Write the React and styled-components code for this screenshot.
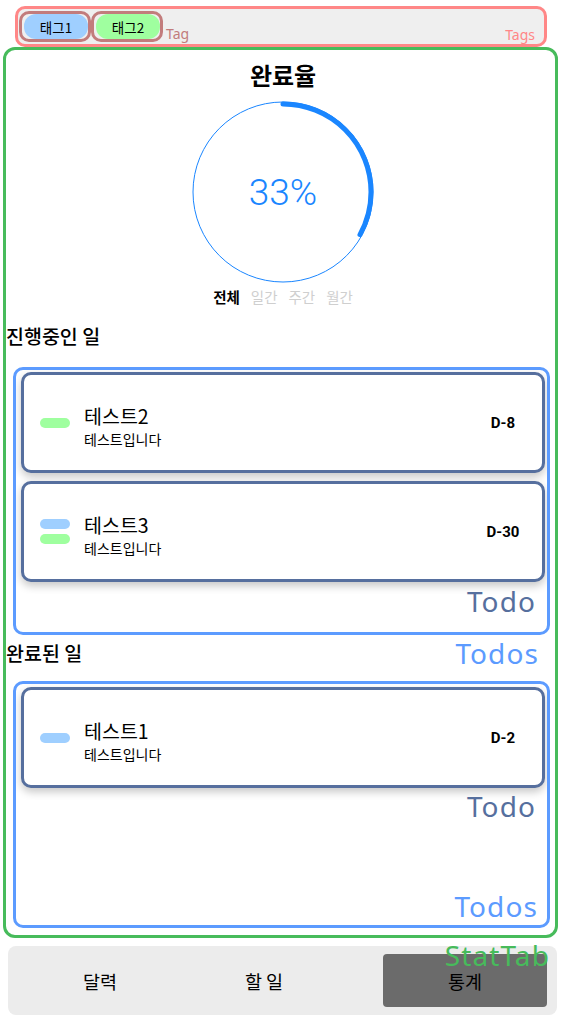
import React from "react";
import styled, { createGlobalStyle } from "styled-components";

const GlobalStyle = createGlobalStyle`
  html, body { margin: 0; padding: 0; background: #ffffff; }
  body { font-family: "Noto Sans CJK KR", "Noto Sans", sans-serif; color: #000; }
  * { box-sizing: border-box; }
`;

const Screen = styled.div`
  height: 100vh;
  display: flex;
  flex-direction: column;
`;

const DebugLabel = styled.span`
  position: absolute;
  font-family: "Noto Sans", "Noto Sans CJK KR", sans-serif;
  font-size: ${(p) => p.$size}px;
  line-height: ${(p) => p.$size}px;
  letter-spacing: ${(p) => (p.$size > 20 ? "1.1px" : "0")};
  color: ${(p) => p.$color};
  white-space: nowrap;
  pointer-events: none;
  z-index: 5;
`;

const TagsBar = styled.div`
  position: relative;
  margin: 6px 16px 0 15px;
  height: 41px;
  border: 3px solid #ff8787;
  border-radius: 10px;
  background: #efefef;
  display: flex;
  align-items: center;
  padding-left: 1px;
`;

const TagSlot = styled.div`
  position: relative;
  border: 3px solid #c27c7c;
  border-radius: 10px;
  padding-left: 2px;
  display: flex;
`;

const TagPill = styled.div`
  width: 64px;
  height: 25px;
  border-radius: 12px;
  background: ${(p) => p.$color};
  font-size: 13.5px;
  display: flex;
  align-items: center;
  justify-content: center;
`;

const StatTab = styled.section`
  position: relative;
  flex: 1;
  margin: 0 5px 0 3px;
  border: 3px solid #47bb5b;
  border-radius: 12px;
  display: flex;
  flex-direction: column;
  min-height: 0;
`;

const Summary = styled.div`
  padding-left: 5px;
  display: flex;
  flex-direction: column;
  align-items: center;
`;

const Title = styled.h1`
  margin: 10px 0 0;
  font-size: 24px;
  line-height: 30px;
  font-weight: 700;
`;

const RingWrap = styled.div`
  margin-top: 10px;
  position: relative;
  width: 184px;
  height: 184px;
`;

const RingText = styled.div`
  position: absolute;
  inset: 0;
  display: flex;
  align-items: center;
  justify-content: center;
  font-family: "Roboto", "Liberation Sans", sans-serif;
  font-weight: 300;
  font-size: 37px;
  color: #1a86ff;
`;

const Periods = styled.div`
  margin-top: 3px;
  display: flex;
  justify-content: center;
  gap: 11px;
  font-size: 14.5px;
  line-height: 20px;
`;

const Period = styled.span`
  color: ${(p) => (p.$active ? "#000" : "#cfcfcf")};
  font-weight: ${(p) => (p.$active ? 700 : 400)};
`;

const SectionTitle = styled.h2`
  margin: ${(p) => p.$top}px 0 0;
  font-size: 19.5px;
  line-height: 26px;
  font-weight: 500;
`;

const TodosBox = styled.div`
  position: relative;
  margin: ${(p) => p.$top}px 5px ${(p) => p.$bottom}px 7px;
  border: 3px solid #5c9bff;
  border-radius: 10px;
  ${(p) => (p.$grow ? "flex: 1;" : `height: ${p.$height}px;`)}
`;

const TodoList = styled.div`
  overflow: hidden;
  padding: ${(p) => p.$top}px 2px 12px 5px;
  display: flex;
  flex-direction: column;
  gap: 8px;
`;

const Card = styled.div`
  height: 101px;
  border: 3px solid #566f9e;
  border-radius: 10px;
  background: #fff;
  box-shadow: 0 4px 8px rgba(0, 0, 0, 0.22);
  display: flex;
  align-items: center;
  padding: 0 14px 0 16px;
`;

const Bars = styled.div`
  width: 30px;
  display: flex;
  flex-direction: column;
  gap: 5px;
`;

const Bar = styled.div`
  height: 10px;
  border-radius: 5px;
  background: ${(p) => p.$color};
`;

const TextCol = styled.div`
  flex: 1;
  margin-left: 14px;
  padding-top: 6px;
  display: flex;
  flex-direction: column;
`;

const TodoTitle = styled.div`
  font-size: 19.5px;
  line-height: 26px;
`;

const TodoDesc = styled.div`
  font-size: 14px;
  line-height: 20px;
`;

const DDay = styled.div`
  width: 50px;
  text-align: center;
  font-family: "Roboto", "Liberation Sans", sans-serif;
  font-weight: 700;
  font-size: 15px;
`;

const NavBar = styled.nav`
  margin: 8px 6px 3px 8px;
  height: 69px;
  background: #ececec;
  border-radius: 8px;
  display: flex;
  padding: 8px 10px;
`;

const NavItem = styled.div`
  flex: 0 0 164px;
  border-radius: 4px;
  display: flex;
  align-items: center;
  justify-content: center;
  font-size: 18.5px;
  background: ${(p) => (p.$active ? "#6b6b6b" : "transparent")};
  ${(p) => (p.$active ? "margin-left: auto;" : "")}
`;

const R = 90;
const ARC_R = 88;
const CIRC = 2 * Math.PI * ARC_R;

function Ring({ percent }) {
  return (
    <RingWrap>
      <svg width="184" height="184" viewBox="0 0 184 184">
        <circle cx="92" cy="92" r={R} fill="none" stroke="#1a86ff" strokeWidth="1" />
        <circle
          cx="92"
          cy="92"
          r={ARC_R}
          fill="none"
          stroke="#1a86ff"
          strokeWidth="5"
          strokeLinecap="round"
          strokeDasharray={`${(CIRC * percent) / 100} ${CIRC}`}
          transform="rotate(-90 92 92)"
        />
      </svg>
      <RingText>{percent}%</RingText>
    </RingWrap>
  );
}

const BLUE = "#9fcfff";
const GREEN = "#9fff9f";

function TodoCard({ title, desc, dday, colors }) {
  return (
    <Card>
      <Bars>
        {colors.map((c, i) => (
          <Bar key={i} $color={c} />
        ))}
      </Bars>
      <TextCol>
        <TodoTitle>{title}</TodoTitle>
        <TodoDesc>{desc}</TodoDesc>
      </TextCol>
      <DDay>{dday}</DDay>
    </Card>
  );
}

export default function App() {
  return (
    <>
      <GlobalStyle />
      <Screen>
        <TagsBar>
          <TagSlot>
            <TagPill $color={BLUE}>태그1</TagPill>
          </TagSlot>
          <TagSlot>
            <TagPill $color={GREEN}>태그2</TagPill>
            <DebugLabel $size={14} $color="#c27c7c" style={{ left: "calc(100% + 6px)", bottom: -2 }}>
              Tag
            </DebugLabel>
          </TagSlot>
          <DebugLabel $size={14} $color="#ff8787" style={{ right: 9, bottom: 2 }}>
            Tags
          </DebugLabel>
        </TagsBar>

        <StatTab>
          <Summary>
            <Title>완료율</Title>
            <Ring percent={33} />
            <Periods>
              <Period $active>전체</Period>
              <Period>일간</Period>
              <Period>주간</Period>
              <Period>월간</Period>
            </Periods>
          </Summary>

          <SectionTitle $top={16}>진행중인 일</SectionTitle>
          <TodosBox $top={18} $bottom={0} $height={268}>
            <TodoList $top={2}>
              <TodoCard title="테스트2" desc="테스트입니다" dday="D-8" colors={[GREEN]} />
              <TodoCard title="테스트3" desc="테스트입니다" dday="D-30" colors={[BLUE, GREEN]} />
            </TodoList>
            <DebugLabel $size={28} $color="#566f9e" style={{ right: 11, top: 217 }}>
              Todo
            </DebugLabel>
            <DebugLabel $size={28} $color="#5c9bff" style={{ right: 8, top: "calc(100% + 7px)" }}>
              Todos
            </DebugLabel>
          </TodosBox>

          <SectionTitle $top={5}>완료된 일</SectionTitle>
          <TodosBox $top={15} $bottom={7} $grow>
            <TodoList $top={3}>
              <TodoCard title="테스트1" desc="테스트입니다" dday="D-2" colors={[BLUE]} />
            </TodoList>
            <DebugLabel $size={28} $color="#566f9e" style={{ right: 11, top: 108 }}>
              Todo
            </DebugLabel>
            <DebugLabel $size={28} $color="#5c9bff" style={{ right: 9, bottom: 5 }}>
              Todos
            </DebugLabel>
          </TodosBox>

          <DebugLabel $size={28} $color="#47bb5b" style={{ right: 5, top: "calc(100% + 6px)" }}>
            StatTab
          </DebugLabel>
        </StatTab>

        <NavBar>
          <NavItem>달력</NavItem>
          <NavItem>할 일</NavItem>
          <NavItem $active>통계</NavItem>
        </NavBar>
      </Screen>
    </>
  );
}
